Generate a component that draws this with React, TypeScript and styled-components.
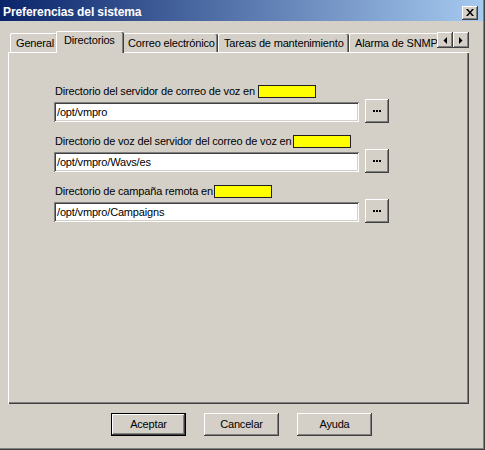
import React from "react";
import styled, { createGlobalStyle } from "styled-components";

const Global = createGlobalStyle`
  html, body { margin: 0; padding: 0; background: #d4d0c8; }
  * { box-sizing: border-box; }
`;

const face = "#d4d0c8";
const raised = `inset -1px -1px #404040, inset 1px 1px #ffffff, inset -2px -2px #808080, inset 2px 2px ${face}`;
const sunken = `inset 1px 1px #808080, inset -1px -1px #ffffff, inset 2px 2px #404040, inset -2px -2px ${face}`;

const Window = styled.div`
  width: 485px;
  height: 450px;
  background: ${face};
  box-shadow: inset -1px -1px #404040, inset -2px -2px #808080;
  display: flex;
  flex-direction: column;
  font-family: "Liberation Sans", Arial, sans-serif;
  font-size: 11px;
  letter-spacing: -0.17px;
  color: #000;
  overflow: hidden;
`;

const TitleBar = styled.div`
  height: 21px;
  margin-right: 2px;
  background: linear-gradient(to right, #0a246a, #a6caf0);
  display: flex;
  align-items: center;
  padding: 0 5px 0 3px;
`;

const Title = styled.div`
  flex: 1;
  color: #fff;
  font-weight: bold;
  font-size: 12px;
  letter-spacing: -0.1px;
  line-height: 14px;
  padding-top: 2px;
`;

const CloseBtn = styled.div`
  width: 16px;
  height: 14px;
  margin-top: 4px;
  background: ${face};
  box-shadow: ${raised};
  display: flex;
  align-items: center;
  justify-content: center;
`;

const Body = styled.div`
  padding: 10px 16px 0 8px;
  display: flex;
  flex-direction: column;
`;

const TabStrip = styled.div`
  display: flex;
  height: 21px;
  align-items: flex-end;
`;

const Tabs = styled.div`
  flex: 1;
  display: flex;
  align-items: flex-end;
  overflow: hidden;
  padding-left: 2px;
  height: 22px;
  margin-bottom: -1px;
`;

const Tab = styled.div<{ $w: number; $active?: boolean }>`
  flex: none;
  position: relative;
  z-index: ${(p) => (p.$active ? 2 : 1)};
  width: ${(p) => p.$w + (p.$active ? 4 : 0)}px;
  height: ${(p) => (p.$active ? 22 : 19)}px;
  margin: 0 ${(p) => (p.$active ? -2 : 0)}px ${(p) => (p.$active ? 0 : 1)}px;
  background: ${face};
  border-top: 1px solid #fff;
  border-left: 1px solid #fff;
  border-top-left-radius: 2px;
  border-top-right-radius: 2px;
  box-shadow: inset -1px 0 #404040, inset -2px 0 #808080;
  white-space: nowrap;
  padding: ${(p) => (p.$active ? "2px" : "3px")} 0 0 ${(p) => (p.$active ? 7 : 5)}px;
  line-height: 13px;
`;

const Arrows = styled.div`
  display: flex;
  margin-bottom: 4px;
`;

const ArrowBtn = styled.div`
  width: 16px;
  height: 16px;
  background: ${face};
  box-shadow: ${raised};
  display: flex;
  align-items: center;
  justify-content: center;
`;

const Panel = styled.div`
  height: 352px;
  border-top: 1px solid #fff;
  border-left: 1px solid #fff;
  box-shadow: inset -1px -1px #404040, inset -2px -2px #808080;
  padding: 31px 0 0 45px;
  display: flex;
  flex-direction: column;
  gap: 11px;
`;

const Field = styled.div`
  display: flex;
  flex-direction: column;
`;

const Label = styled.div`
  height: 14px;
  line-height: 14px;
  margin-bottom: 1px;
  padding-left: 1px;
  display: flex;
  align-items: center;
  white-space: nowrap;
`;

const Yellow = styled.span<{ $gap: number }>`
  display: inline-block;
  width: 58px;
  height: 13px;
  margin-left: ${(p) => p.$gap}px;
  background: #ffff00;
  border: 1px solid #202020;
`;

const InputRow = styled.div`
  display: flex;
  align-items: center;
  height: 24px;
`;

const Input = styled.div`
  width: 305px;
  height: 20px;
  margin-top: 2px;
  background: #fff;
  box-shadow: ${sunken};
  padding: 3px 3px 0;
  line-height: 14px;
  white-space: nowrap;
`;

const Browse = styled.div`
  width: 24px;
  height: 24px;
  margin-left: 6px;
  background: ${face};
  box-shadow: ${raised};
  display: flex;
  align-items: center;
  justify-content: center;
`;

const Footer = styled.div`
  display: flex;
  gap: 18px;
  padding: 9px 0 0 103px;
`;

const Button = styled.div<{ $default?: boolean }>`
  width: 75px;
  height: 23px;
  background: ${face};
  box-shadow: ${(p) =>
    p.$default
      ? `inset 0 0 0 1px #000, inset -2px -2px #404040, inset 2px 2px #ffffff, inset -3px -3px #808080`
      : raised};
  display: flex;
  align-items: center;
  justify-content: center;
  line-height: 13px;
`;

const Dots = () => (
  <svg width="8" height="2" viewBox="0 0 8 2">
    <rect x="0" y="0" width="2" height="2" fill="#000" />
    <rect x="3" y="0" width="2" height="2" fill="#000" />
    <rect x="6" y="0" width="2" height="2" fill="#000" />
  </svg>
);

const fields = [
  { label: "Directorio del servidor de correo de voz en", gap: 3, value: "/opt/vmpro" },
  { label: "Directorio de voz del servidor del correo de voz en", gap: 1, value: "/opt/vmpro/Wavs/es" },
  { label: "Directorio de campaña remota en", gap: 1, value: "/opt/vmpro/Campaigns" },
];

export default function App() {
  return (
    <>
      <Global />
      <Window>
        <TitleBar>
          <Title>Preferencias del sistema</Title>
          <CloseBtn>
            <svg width="8" height="7" viewBox="0 0 8 7">
              <path d="M0 0 L2 0 L4 2.5 L6 0 L8 0 L5 3.5 L8 7 L6 7 L4 4.5 L2 7 L0 7 L3 3.5 Z" fill="#000" />
            </svg>
          </CloseBtn>
        </TitleBar>
        <Body>
          <TabStrip>
            <Tabs>
              <Tab $w={48}>General</Tab>
              <Tab $w={64} $active>Directorios</Tab>
              <Tab $w={96}>Correo electrónico</Tab>
              <Tab $w={131}>Tareas de mantenimiento</Tab>
              <Tab $w={100}>Alarma de SNMP</Tab>
            </Tabs>
            <Arrows>
              <ArrowBtn>
                <svg width="4" height="7" viewBox="0 0 4 7">
                  <path d="M4 0 L4 7 L0.5 3.5 Z" fill="#000" />
                </svg>
              </ArrowBtn>
              <ArrowBtn>
                <svg width="4" height="7" viewBox="0 0 4 7">
                  <path d="M0 0 L0 7 L3.5 3.5 Z" fill="#000" />
                </svg>
              </ArrowBtn>
            </Arrows>
          </TabStrip>
          <Panel>
            {fields.map((f) => (
              <Field key={f.label}>
                <Label>
                  {f.label}
                  <Yellow $gap={f.gap} />
                </Label>
                <InputRow>
                  <Input>{f.value}</Input>
                  <Browse>
                    <Dots />
                  </Browse>
                </InputRow>
              </Field>
            ))}
          </Panel>
          <Footer>
            <Button $default>Aceptar</Button>
            <Button>Cancelar</Button>
            <Button>Ayuda</Button>
          </Footer>
        </Body>
      </Window>
    </>
  );
}
